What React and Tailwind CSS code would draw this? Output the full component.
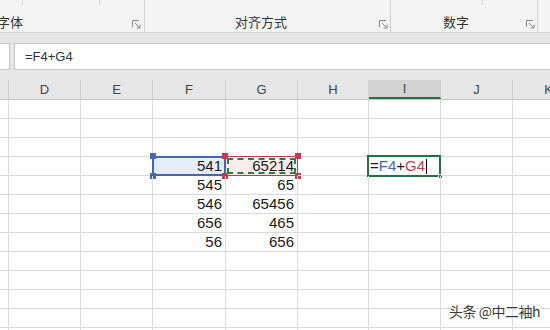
import React from "react";

const COLS = [
  { k: "C", w: "w-[9px]" },
  { k: "D", w: "w-[72px]" },
  { k: "E", w: "w-[72px]" },
  { k: "F", w: "w-[73px]" },
  { k: "G", w: "w-[72px]" },
  { k: "H", w: "w-[71px]" },
  { k: "I", w: "w-[72px]" },
  { k: "J", w: "w-[72px]" },
  { k: "K", w: "w-[72px]" },
];

const DATA = {
  F4: "541", G4: "65214",
  F5: "545", G5: "65",
  F6: "546", G6: "65456",
  F7: "656", G7: "465",
  F8: "56", G8: "656",
};

function Launcher() {
  return (
    <svg width="9" height="9" viewBox="0 0 9 9" className="text-[#8a8a8a]" fill="none" stroke="currentColor" strokeWidth="1">
      <path d="M0.5 7V0.5H7" />
      <path d="M3 3L7.8 7.8" />
      <path d="M8 4.5V8H4.5" />
    </svg>
  );
}

function Handle({ className }) {
  return <div className={`absolute w-[6px] h-[6px] ${className}`} />;
}

function CellContent({ id }) {
  if (id === "F4") {
    return (
      <>
        <div className="absolute left-[-1px] top-[-1px] right-[-1px] bottom-[-1px] bg-[#e7edf8] border-2 border-[#4468ad]" />
        <Handle className="bg-[#4468ad] left-[-3px] top-[-4px]" />
        <Handle className="bg-[#4468ad] left-[-3px] bottom-[-4px]" />
        <span className="relative pr-[3px]">{DATA[id]}</span>
      </>
    );
  }
  if (id === "G4") {
    return (
      <>
        <div className="absolute left-[-1px] top-[-1px] right-[-1px] bottom-[-1px] bg-[#fbecec] border border-[#b8404e]" />
        <div className="absolute left-[1px] top-[1px] right-[1px] bottom-[1px] border-2 border-dashed border-[#2e7a4a]" />
        <Handle className="bg-[#b8404e] left-[-4px] top-[-4px]" />
        <Handle className="bg-[#b8404e] right-[-4px] top-[-4px]" />
        <Handle className="bg-[#b8404e] left-[-4px] bottom-[-4px]" />
        <Handle className="bg-[#b8404e] right-[-4px] bottom-[-4px]" />
        <span className="relative pr-[3px]">{DATA[id]}</span>
      </>
    );
  }
  if (id === "I4") {
    return (
      <>
        <div className="absolute left-[-2px] top-[-2px] right-[-1px] bottom-[-2px] border-2 border-[#217346]" />
        <div className="absolute right-[-3px] bottom-[-4px] w-[5px] h-[5px] bg-[#217346] border border-white" />
        <div className="relative w-full pl-[1px] flex items-end">
          <span>=</span>
          <span className="text-[#4468ad]">F4</span>
          <span>+</span>
          <span className="text-[#b8404e]">G4</span>
          <span className="inline-block w-px h-[15px] bg-black ml-[1px] mb-[1px]" />
        </div>
      </>
    );
  }
  return DATA[id] ? <span className="pr-[3px]">{DATA[id]}</span> : null;
}

export default function App() {
  const rows = Array.from({ length: 13 }, (_, i) => i + 1);

  return (
    <div className="relative w-[550px] h-[330px] overflow-hidden bg-white font-['Liberation_Sans','Noto_Sans_CJK_SC',sans-serif] text-[#222]">
      {/* Ribbon */}
      <div className="h-[33px] bg-[#f3f3f3] border-b border-[#d4d4d4] flex">
        <div className="relative w-[145px] shrink-0 border-r border-[#d0d0d0] flex items-end pb-[2px]">
          <div className="absolute left-[22px] top-0 w-px h-[5px] bg-[#d6d6d6]" />
          <div className="absolute left-[99px] top-0 w-px h-[5px] bg-[#d6d6d6]" />
          <span className="text-[13px] leading-[16px] -ml-[3px] font-['Noto_Sans_CJK_SC',sans-serif] text-[#333]">字体</span>
          <div className="ml-auto mr-[3px] mb-[1px]"><Launcher /></div>
        </div>
        <div className="relative w-[246px] shrink-0 border-r border-[#d0d0d0] flex items-end pb-[2px]">
          <span className="ml-[90px] text-[13px] leading-[16px] font-['Noto_Sans_CJK_SC',sans-serif] text-[#333]">对齐方式</span>
          <div className="ml-auto mr-[2px] mb-[1px]"><Launcher /></div>
        </div>
        <div className="relative w-[147px] shrink-0 border-r border-[#d0d0d0] flex items-end pb-[2px]">
          <div className="absolute left-[91px] top-0 w-px h-[5px] bg-[#d6d6d6]" />
          <span className="ml-[52px] text-[13px] leading-[16px] font-['Noto_Sans_CJK_SC',sans-serif] text-[#333]">数字</span>
          <div className="ml-auto mr-[2px] mb-[1px]"><Launcher /></div>
        </div>
        <div className="flex-1" />
      </div>

      {/* Formula bar */}
      <div className="h-[10px] bg-[#e6e6e6]" />
      <div className="h-[27px] bg-[#e6e6e6] flex gap-[4px]">
        <div className="w-[10px] bg-white border border-l-0 border-[#c6c6c6]" />
        <div className="flex-1 bg-white border border-r-0 border-[#c6c6c6] flex items-center pl-[10px] text-[13px] text-[#333]">
          =F4+G4
        </div>
      </div>
      <div className="h-[10px] bg-[#e6e6e6]" />

      {/* Column headers */}
      <div className="h-[20px] flex bg-[#e6e6e6] border-b border-[#c8c8c8]">
        {COLS.map((c) => (
          <div
            key={c.k}
            className={`${c.w} shrink-0 border-r border-[#cfcfcf] flex items-center justify-center text-[13px] text-[#444] ${
              c.k === "I" ? "bg-[#d2d2d2] border-b-2 border-b-[#217346] text-[#222]" : ""
            }`}
          >
            {c.k === "C" ? "" : c.k}
          </div>
        ))}
      </div>

      {/* Grid */}
      {rows.map((r) => (
        <div key={r} className="h-[19px] flex">
          {COLS.map((c) => {
            const id = `${c.k}${r}`;
            return (
              <div
                key={id}
                className={`${c.w} shrink-0 relative border-r border-b border-[#dadada] flex items-end justify-end text-[15px] leading-[18px] text-[#1a1a1a]`}
              >
                <CellContent id={id} />
              </div>
            );
          })}
        </div>
      ))}

      {/* Watermark */}
      <div className="absolute right-[10px] bottom-[8px] text-[14px] tracking-[-0.5px] text-[#3a3a3a] font-['Noto_Sans_CJK_SC',sans-serif] [text-shadow:0_0_2px_#fff,0_0_2px_#fff]">
        头条 @中二袖h
      </div>
    </div>
  );
}
